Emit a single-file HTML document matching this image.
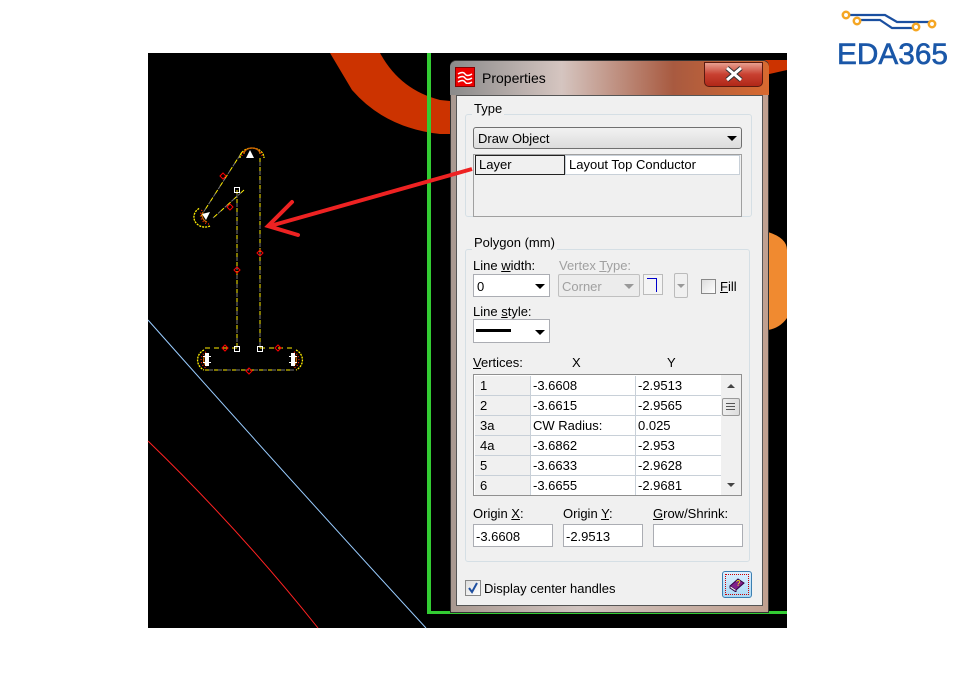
<!DOCTYPE html>
<html><head><meta charset="utf-8"><style>
*{margin:0;padding:0;box-sizing:border-box}
body{width:963px;height:689px;background:#fff;position:relative;overflow:hidden;font-family:"Liberation Sans",sans-serif;font-size:13px;color:#000}
.a{position:absolute}
.t{position:absolute;white-space:nowrap;line-height:15px}
.box{position:absolute;background:#fff;border:1px solid #abadb3}
.grp{position:absolute;border:1px solid #d5dfe5;border-radius:3px}
.lbl{position:absolute;background:#f0f0f0;padding:0 2px;line-height:15px}
.arr{position:absolute;width:0;height:0;border-left:5px solid transparent;border-right:5px solid transparent;border-top:5px solid #000}
.row{position:absolute;left:0;width:246px;height:20px;border-bottom:1px solid #c8d0d8}
.row span{position:absolute;top:3px;line-height:14px}
.g{color:#a0a0a0}
u{text-decoration:underline}
</style></head><body>
<svg class="a" style="left:0;top:0" width="963" height="689">
<rect x="148" y="53" width="639" height="575" fill="#000"/>
<path d="M330 53 L380 53 Q400 90 440 100 L460 102 L460 134 L440 134 Q385 128 352 90 Z" fill="#cc3300"/>
<path d="M768 232 Q787 238 787 250 L787 318 Q780 328 768 330 Z" fill="#f08a30"/>
<path d="M760 60 L787 60 L787 70 L765 75 Z" fill="#cc3300"/>
<rect x="427" y="53" width="4" height="561" fill="#33cc33"/>
<rect x="427" y="611" width="360" height="3" fill="#33cc33"/>
<path d="M148 320 Q290 480 426 628" stroke="#99ccff" fill="none"/>
<path d="M148 441 Q240 530 318 628" stroke="#ff2222" fill="none"/>
<g fill="none" stroke-width="1">
<path d="M242 152 L201 216 M244 190 L213 218 M237 190 L237 348 M260 158 L260 348 M237 348 L205 348 M260 348 L292 348 M205 370 L295 370" stroke="#ffee00" stroke-dasharray="5 4"/>
<path d="M242 152 L201 216 M244 190 L213 218 M237 190 L237 348 M260 158 L260 348 M205 370 L295 370" stroke="#777" stroke-dasharray="4 5" stroke-dashoffset="5"/>
</g>
<g fill="none" stroke-width="1.3">
<g stroke="#ffee00" stroke-dasharray="2 1"><path d="M240 158 A12 10 0 0 1 264 158"/><path d="M210 226 A11 10 0 0 1 200 208"/><path d="M204 350 A11 11 0 0 0 204 370"/><path d="M296 350 A11 11 0 0 1 296 370"/></g>
<g stroke="#ff2200" stroke-dasharray="1 2"><path d="M242 156 A10 8 0 0 1 262 156"/><path d="M209 224 A9 9 0 0 1 202 210"/><path d="M206 352 A9 9 0 0 0 206 368"/><path d="M294 352 A9 9 0 0 1 294 368"/></g>
<g stroke="#cc6600"><path d="M244 154 A8 6 0 0 1 260 154"/><path d="M207 222 A7 7 0 0 1 203 212"/><path d="M207 354 A7 7 0 0 0 207 366"/><path d="M293 354 A7 7 0 0 1 293 366"/></g>
</g>
<g fill="#fff"><path d="M246 158 L250 150 L254 158 Z"/><path d="M202 214 L210 212 L206 220 Z"/><rect x="205" y="353" width="4" height="13"/><rect x="291" y="353" width="4" height="13"/><rect x="203" y="356" width="8" height="1"/><rect x="203" y="362" width="8" height="1"/><rect x="289" y="356" width="8" height="1"/><rect x="289" y="362" width="8" height="1"/></g>
<g fill="none" stroke="#ff0000"><path d="M220 176 l3 -3 l3 3 l-3 3z M227 207 l3 -3 l3 3 l-3 3z M234 270 l3 -3 l3 3 l-3 3z M257 253 l3 -3 l3 3 l-3 3z M222 348 l3 -3 l3 3 l-3 3z M275 348 l3 -3 l3 3 l-3 3z M246 371 l3 -3 l3 3 l-3 3z"/></g>
<g fill="none" stroke="#fff"><rect x="234.5" y="187.5" width="5" height="5"/><rect x="234.5" y="346.5" width="5" height="5"/><rect x="257.5" y="346.5" width="5" height="5"/></g>
<!-- logo -->
<g fill="none" stroke="#1a4fa0" stroke-width="2.2"><path d="M846 15 L885 15 L897 22 L932 22"/><path d="M858 20 L880 20 L892 28 L916 28"/></g>
<g fill="#fff" stroke="#f5a623" stroke-width="2.5"><circle cx="846" cy="15" r="3.2"/><circle cx="857" cy="21" r="3.2"/><circle cx="916" cy="27" r="3.2"/><circle cx="932" cy="24" r="3.2"/></g>
<text x="837" y="64" font-family="Liberation Sans,sans-serif" font-size="30" fill="#1a57a8" stroke="#1a57a8" stroke-width="0.6" textLength="111" lengthAdjust="spacingAndGlyphs">EDA365</text>
</svg>

<!-- dialog frame -->
<div class="a" style="left:450px;top:60px;width:319px;height:553px;border:1px solid #333;border-radius:6px 6px 0 0;background:linear-gradient(90deg,#a89890,#d0c4c0 40%,#c0a090);"></div>
<div class="a" style="left:450px;top:61px;width:319px;height:34px;border-radius:6px 6px 0 0;background:linear-gradient(90deg,#8a8a8a 0%,#d5c5c0 35%,#a85a40 70%,#d86a30 100%)"></div>
<div class="a" style="left:455px;top:67px;width:20px;height:20px;background:#e00;border:1px solid #800"></div>
<svg class="a" style="left:457px;top:70px" width="16" height="14"><path d="M1 4 Q6 1 8 4 T15 4 M1 8 Q6 5 8 8 T15 8 M1 12 Q6 9 8 12 T15 12" stroke="#fff" stroke-width="1.5" fill="none"/></svg>
<div class="t" style="left:482px;top:71px;font-size:14px">Properties</div>
<div class="a" style="left:704px;top:62px;width:59px;height:25px;border:1px solid #5a1a10;border-radius:0 0 5px 5px;background:linear-gradient(#e8a090,#c84030 50%,#b02818)"></div>
<svg class="a" style="left:724px;top:66px" width="20" height="16"><path d="M3 2 L17 14 M17 2 L3 14" stroke="#333" stroke-width="5"/><path d="M3 2 L17 14 M17 2 L3 14" stroke="#fff" stroke-width="3"/></svg>
<div class="a" style="left:456px;top:95px;width:307px;height:511px;background:#f0f0f0;border:1px solid #555"></div>

<div class="grp" style="left:465px;top:114px;width:287px;height:103px"></div>
<div class="lbl" style="left:472px;top:101px">Type</div>
<div class="a" style="left:473px;top:127px;width:269px;height:22px;border:1px solid #707070;border-radius:3px;background:linear-gradient(#f2f2f2,#dcdcdc)"></div>
<div class="t" style="left:478px;top:131px">Draw Object</div>
<div class="arr" style="left:727px;top:136px"></div>
<div class="a" style="left:473px;top:154px;width:269px;height:63px;border:1px solid #a0a0a0;background:#f0f0f0"></div>
<div class="a" style="left:475px;top:155px;width:90px;height:20px;border:1px solid #222;background:#f0f0f0"></div>
<div class="a" style="left:565px;top:155px;width:175px;height:20px;background:#fff;border:1px solid #c8d0d8"></div>
<div class="t" style="left:479px;top:157px">Layer</div>
<div class="t" style="left:569px;top:157px">Layout Top Conductor</div>

<div class="grp" style="left:465px;top:249px;width:285px;height:313px"></div>
<div class="lbl" style="left:472px;top:235px">Polygon (mm)</div>
<div class="t" style="left:473px;top:258px">Line <u>w</u>idth:</div>
<div class="t g" style="left:559px;top:258px">Vertex <u>T</u>ype:</div>
<div class="box" style="left:473px;top:274px;width:77px;height:23px"></div>
<div class="t" style="left:477px;top:279px">0</div>
<div class="arr" style="left:535px;top:284px"></div>
<div class="a" style="left:558px;top:274px;width:82px;height:23px;border:1px solid #c0c0c0;border-radius:2px;background:#ececec"></div>
<div class="t g" style="left:562px;top:279px">Corner</div>
<div class="arr" style="left:624px;top:284px;border-top-color:#999"></div>
<div class="a" style="left:643px;top:274px;width:20px;height:21px;border:1px solid #bbb;background:#f4f4f4"></div>
<div class="a" style="left:647px;top:278px;width:10px;height:14px;border-top:1px solid #00c;border-right:1px solid #00c"></div>
<div class="a" style="left:674px;top:273px;width:14px;height:25px;border:1px solid #bbb;border-radius:2px;background:#f0f0f0"></div>
<div class="arr" style="left:677px;top:284px;border-top-color:#999;border-width:4px 4px 0 4px"></div>
<div class="a" style="left:701px;top:279px;width:15px;height:15px;border:1px solid #888;background:linear-gradient(135deg,#ddd,#fff)"></div>
<div class="t" style="left:720px;top:279px"><u>F</u>ill</div>
<div class="t" style="left:473px;top:304px">Line <u>s</u>tyle:</div>
<div class="box" style="left:473px;top:319px;width:77px;height:24px"></div>
<div class="a" style="left:476px;top:329px;width:35px;height:3px;background:#000"></div>
<div class="arr" style="left:535px;top:330px"></div>

<div class="t" style="left:473px;top:355px"><u>V</u>ertices:</div>
<div class="t" style="left:572px;top:355px">X</div>
<div class="t" style="left:667px;top:355px">Y</div>
<div class="a" style="left:473px;top:374px;width:269px;height:122px;border:1px solid #909090;background:#fff;overflow:hidden">
 <div class="a" style="left:1px;top:1px;width:246px;height:120px">
  <div class="a" style="left:0;top:0;width:55px;height:120px;background:#f0f0f0"></div>
  <div class="row" style="top:0"><span style="left:5px">1</span><span style="left:58px">-3.6608</span><span style="left:163px">-2.9513</span></div>
  <div class="row" style="top:20px"><span style="left:5px">2</span><span style="left:58px">-3.6615</span><span style="left:163px">-2.9565</span></div>
  <div class="row" style="top:40px"><span style="left:5px">3a</span><span style="left:58px">CW Radius:</span><span style="left:163px">0.025</span></div>
  <div class="row" style="top:60px"><span style="left:5px">4a</span><span style="left:58px">-3.6862</span><span style="left:163px">-2.953</span></div>
  <div class="row" style="top:80px"><span style="left:5px">5</span><span style="left:58px">-3.6633</span><span style="left:163px">-2.9628</span></div>
  <div class="row" style="top:100px"><span style="left:5px">6</span><span style="left:58px">-3.6655</span><span style="left:163px">-2.9681</span></div>
  <div class="a" style="left:55px;top:0;width:1px;height:120px;background:#c8d0d8"></div>
  <div class="a" style="left:160px;top:0;width:1px;height:120px;background:#c8d0d8"></div>
 </div>
 <div class="a" style="left:247px;top:0;width:20px;height:120px;background:#f0f0f0"></div>
 <div class="a" style="left:253px;top:9px;border-left:4px solid transparent;border-right:4px solid transparent;border-bottom:4px solid #444"></div>
 <div class="a" style="left:248px;top:23px;width:18px;height:18px;border:1px solid #999;border-radius:2px;background:linear-gradient(90deg,#eee,#ddd)"></div>
 <div class="a" style="left:252px;top:28px;width:9px;height:7px;border-top:1px solid #555;border-bottom:1px solid #555"></div>
 <div class="a" style="left:252px;top:31px;width:9px;height:1px;background:#555"></div>
 <div class="a" style="left:253px;top:108px;border-left:4px solid transparent;border-right:4px solid transparent;border-top:4px solid #444"></div>
</div>

<div class="t" style="left:473px;top:506px">Origin <u>X</u>:</div>
<div class="t" style="left:563px;top:506px">Origin <u>Y</u>:</div>
<div class="t" style="left:653px;top:506px"><u>G</u>row/Shrink:</div>
<div class="box" style="left:473px;top:524px;width:80px;height:23px"></div>
<div class="t" style="left:476px;top:529px">-3.6608</div>
<div class="box" style="left:563px;top:524px;width:80px;height:23px"></div>
<div class="t" style="left:566px;top:529px">-2.9513</div>
<div class="box" style="left:653px;top:524px;width:90px;height:23px"></div>

<div class="a" style="left:465px;top:580px;width:16px;height:16px;border:1px solid #888;background:linear-gradient(135deg,#ddd,#fff)"></div>
<svg class="a" style="left:467px;top:582px" width="12" height="12"><path d="M2 6 L5 10 L10 1" stroke="#2050a0" stroke-width="2" fill="none"/></svg>
<div class="t" style="left:484px;top:581px">Display center handles</div>
<div class="a" style="left:722px;top:571px;width:30px;height:27px;border:1px solid #3c7fb1;border-radius:3px;background:linear-gradient(#dcefff,#a9d8f5)"></div>
<div class="a" style="left:725px;top:574px;width:24px;height:21px;border:1px dotted #c00"></div>
<svg class="a" style="left:728px;top:576px" width="18" height="16"><path d="M2 10 L10 3 L16 7 L8 14 Z" fill="#80208a" stroke="#300040"/><path d="M2 10 L2 12 L8 16 L8 14" fill="#eee" stroke="#300040"/><text x="8" y="10" font-size="8" fill="#ff0" font-family="Liberation Sans">?</text></svg>

<svg class="a" style="left:0;top:0;pointer-events:none" width="963" height="689">
<path d="M472 169 L270 226" stroke="#ee2222" stroke-width="4"/>
<path d="M292 202 L268 226 L298 235" stroke="#ee2222" stroke-width="4" fill="none" stroke-linecap="round"/>
</svg>
</body></html>
